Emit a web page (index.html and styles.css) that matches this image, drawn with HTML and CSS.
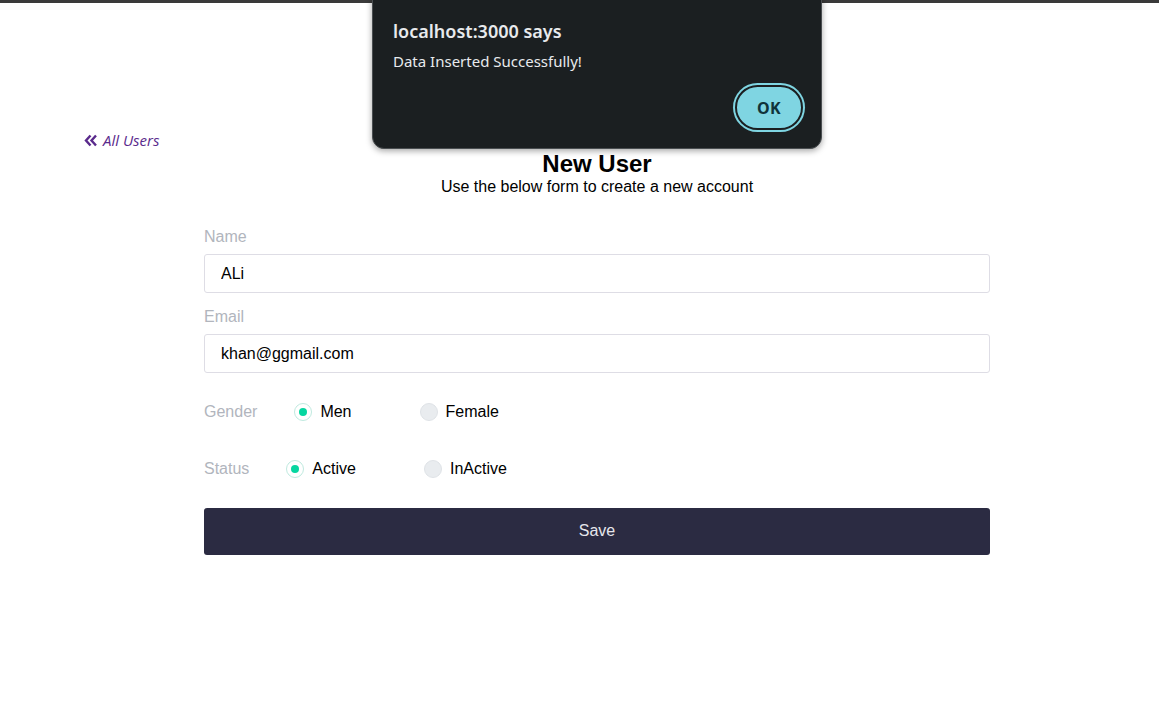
FILE: index.html
```html
<!DOCTYPE html>
<html>
<head>
<meta charset="utf-8">
<link rel="stylesheet" href="styles.css">
</head>
<body>
<div class="topbar"></div>
<div class="page">
  <a class="back" href="#"><svg class="chev" width="14" height="13" viewBox="0 0 14 13"><path d="M6.5 1.5 L2 6.5 L6.5 11.5 M12 1.5 L7.5 6.5 L12 11.5" fill="none" stroke="currentColor" stroke-width="2.4"/></svg><span>All Users</span></a>
  <div class="head">
    <h1 class="title">New User</h1>
    <p class="sub">Use the below form to create a new account</p>
  </div>
  <form class="form">
    <label class="lbl">Name</label>
    <input class="inp" type="text" value="ALi">
    <label class="lbl lbl2">Email</label>
    <input class="inp" type="text" value="khan@ggmail.com">
    <div class="row row-g">
      <span class="rlbl">Gender</span>
      <span class="opt"><span class="radio on"></span>Men</span>
      <span class="opt"><span class="radio"></span>Female</span>
    </div>
    <div class="row row-s">
      <span class="rlbl">Status</span>
      <span class="opt"><span class="radio on"></span>Active</span>
      <span class="opt"><span class="radio"></span>InActive</span>
    </div>
    <button type="button" class="save">Save</button>
  </form>
</div>
<div class="dialog">
  <div class="d-title">localhost:3000 says</div>
  <div class="d-msg">Data Inserted Successfully!</div>
  <div class="d-actions"><button type="button" class="ok">OK</button></div>
</div>
</body>
</html>
```
FILE: styles.css
```css
html, body { margin: 0; padding: 0; background: #fff; }
body { font-family: "Liberation Sans", Arial, sans-serif; color: #000; position: relative; height: 724px; overflow: hidden; }
.topbar { height: 3px; background: #3a3a3a; }
.page { padding: 128px 0 0 84px; }
.back { display: inline-flex; align-items: center; gap: 5px; color: #5a2a8c; text-decoration: none; font-family: "Open Sans", "Noto Sans", sans-serif; font-style: italic; font-size: 15px; height: 18px; }
.chev { color: #5a2a8c; margin-top: 1px; }
.head { width: 786px; margin-left: 120px; text-align: center; margin-top: 0; }
.title { margin: 0; font-size: 24px; font-weight: bold; line-height: 26px; }
.sub { margin: 0; font-size: 16px; line-height: 20px; }
.form { width: 786px; margin-left: 120px; margin-top: 30px; display: flex; flex-direction: column; }
.lbl { color: #b1b5bd; font-size: 16px; line-height: 20px; margin-bottom: 7px; }
.lbl2 { margin-top: 14px; }
.inp { box-sizing: border-box; height: 39px; border: 1px solid #dedde5; border-radius: 3px; padding: 0 16px; font-family: "Liberation Sans", Arial, sans-serif; font-size: 16px; color: #000; outline: none; width: 100%; }
.row { display: flex; align-items: center; font-size: 16px; height: 20px; }
.row-g { margin-top: 29px; }
.row-s { margin-top: 37px; }
.rlbl { color: #b1b5bd; margin-right: 37px; }
.opt { display: inline-flex; align-items: center; gap: 8px; margin-right: 68px; }
.radio { box-sizing: border-box; width: 18px; height: 18px; border-radius: 50%; background: #e9ecef; border: 1px solid #dfe3e7; position: relative; }
.radio.on { background: #fff; border: 1px solid #bfeadf; }
.radio.on::after { content: ""; position: absolute; left: 4px; top: 4px; width: 8px; height: 8px; border-radius: 50%; background: #06d6a0; }
.save { margin-top: 29px; height: 47px; border: 0; border-radius: 3px; background: #2b2b42; color: #e6e6ec; font-family: "Liberation Sans", Arial, sans-serif; font-size: 16px; width: 100%; padding: 0 0 2px 0; }
.dialog { position: absolute; left: 372px; top: -12px; width: 450px; height: 161px; box-sizing: border-box; background: #1b1f21; border: 1px solid #4a4e51; border-radius: 12px; box-shadow: 0 2px 6px rgba(0,0,0,0.35); padding: 30px 20px 0 20px; font-family: "Noto Sans", "Open Sans", sans-serif; color: #e8eaed; }
.d-title { font-size: 18px; font-weight: 600; line-height: 24px; }
.d-msg { font-size: 15px; line-height: 20px; margin-top: 8px; }
.d-actions { display: flex; justify-content: flex-end; margin-top: 14px; }
.ok { width: 68px; height: 45px; border-radius: 23px; background: #7fd5e2; border: 2px solid #1b1f21; box-shadow: 0 0 0 2px #7fd5e2; color: #10333a; font-family: "Noto Sans", sans-serif; font-weight: 700; font-size: 16px; letter-spacing: 0.3px; margin-right: -2px; }
```
